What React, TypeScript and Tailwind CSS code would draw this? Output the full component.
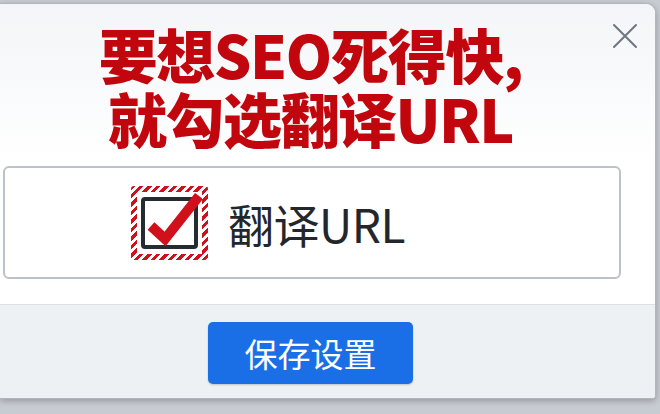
export default function App() {
  return (
    <div className="w-[660px] h-[414px] overflow-hidden bg-[#c7ccd2] pt-[3px] font-['Noto_Sans_CJK_SC','Noto_Sans',sans-serif]">
      <div className="w-[656px] h-[396px] flex flex-col bg-white rounded-tr-[10px] rounded-br-[4px] border-t border-r border-b border-[#aeb6bf] shadow-[0_2px_6px_rgba(0,0,0,0.25)] overflow-hidden">
        {/* 标题区 */}
        <div className="relative h-[157px] bg-gradient-to-b from-[#f3f5f8] to-white flex flex-col items-center pt-[18px] pr-[34px]">
          <h1 className="text-[59px] leading-[64px] font-black text-[#c2060d] text-center tracking-[-1.5px]">
            要想SEO死得快,
            <br />
            就勾选翻译URL
          </h1>
          <button className="absolute right-[14px] top-[16px] w-[32px] h-[32px] flex items-center justify-center text-[#6e7681]">
            <svg width="26" height="26" viewBox="0 0 26 26" fill="none" stroke="currentColor" strokeWidth="2" strokeLinecap="round">
              <path d="M2 2 L24 24 M24 2 L2 24" />
            </svg>
          </button>
        </div>

        {/* 选项区 */}
        <div className="h-[143px] pl-[3px] pr-[34px] pt-[5px]">
          <label className="h-[113px] flex items-center border-2 border-[#bcc2c9] rounded-[6px] pl-[126px] gap-[20px]">
            <span className="w-[77px] h-[74px] p-[6px] rounded-[3px] bg-[repeating-linear-gradient(135deg,#d0101a_0px,#d0101a_3px,#ffffff_3px,#ffffff_6px)]">
              <span className="relative block w-full h-full bg-white">
                <span className="absolute left-[4px] top-[5px] w-[57px] h-[52px] border-[4px] border-[#262b31] rounded-[4px]" />
                <svg className="absolute left-0 top-0" width="65" height="62" viewBox="0 0 65 62">
                  <path d="M14 34 L28 47 L62 4" fill="none" stroke="#d0101a" strokeWidth="10" strokeLinejoin="miter" strokeLinecap="butt" />
                </svg>
              </span>
            </span>
            <span className="text-[46px] leading-none text-[#23272c] tracking-[-0.5px]">翻译URL</span>
          </label>
        </div>

        {/* 底部 */}
        <div className="flex-1 bg-[#eef1f4] border-t border-[#dde1e6] flex items-start justify-center pt-[17px] pr-[34px]">
          <button className="w-[205px] h-[62px] rounded-[5px] bg-[#1a6fe6] text-white text-[33px] leading-none shadow-[0_1px_2px_rgba(0,0,0,0.2)]">
            保存设置
          </button>
        </div>
      </div>
    </div>
  );
}
